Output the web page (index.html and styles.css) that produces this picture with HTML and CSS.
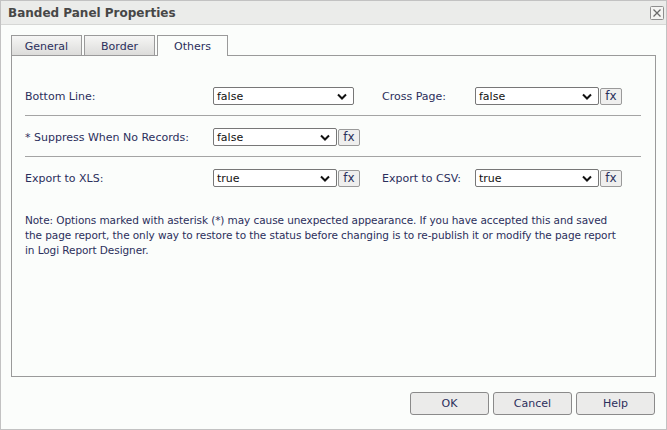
FILE: index.html
```html
<!DOCTYPE html>
<html>
<head>
<meta charset="utf-8">
<link rel="stylesheet" href="styles.css">
</head>
<body>
<div class="dialog">
  <div class="titlebar">
    <span class="title">Banded Panel Properties</span>
    <span class="close"><svg width="14" height="14" viewBox="0 0 14 14"><rect x="0.5" y="0.5" width="13" height="13" rx="1" fill="#f4f4f2" stroke="#8e8e8e"/><path d="M3.5 3.5 L10.5 10.5 M10.5 3.5 L3.5 10.5" stroke="#6a6a6a" stroke-width="1.3"/></svg></span>
  </div>
  <div class="body">
    <div class="tabs">
      <div class="tab">General</div>
      <div class="tab">Border</div>
      <div class="tab active">Others</div>
    </div>
    <div class="panel">
      <div class="row first">
        <span class="label">Bottom Line:</span>
        <span class="field"><span class="select wide">false<svg class="chev" width="10" height="7" viewBox="0 0 10 7"><path d="M1 1.5 L5 5.5 L9 1.5" fill="none" stroke="#111" stroke-width="2"/></svg></span></span>
        <span class="label">Cross Page:</span>
        <span class="field"><span class="select">false<svg class="chev" width="10" height="7" viewBox="0 0 10 7"><path d="M1 1.5 L5 5.5 L9 1.5" fill="none" stroke="#111" stroke-width="2"/></svg></span><span class="fx">fx</span></span>
      </div>
      <div class="row">
        <span class="label">* Suppress When No Records:</span>
        <span class="field"><span class="select">false<svg class="chev" width="10" height="7" viewBox="0 0 10 7"><path d="M1 1.5 L5 5.5 L9 1.5" fill="none" stroke="#111" stroke-width="2"/></svg></span><span class="fx">fx</span></span>
      </div>
      <div class="row last">
        <span class="label">Export to XLS:</span>
        <span class="field"><span class="select">true<svg class="chev" width="10" height="7" viewBox="0 0 10 7"><path d="M1 1.5 L5 5.5 L9 1.5" fill="none" stroke="#111" stroke-width="2"/></svg></span><span class="fx">fx</span></span>
        <span class="label">Export to CSV:</span>
        <span class="field"><span class="select">true<svg class="chev" width="10" height="7" viewBox="0 0 10 7"><path d="M1 1.5 L5 5.5 L9 1.5" fill="none" stroke="#111" stroke-width="2"/></svg></span><span class="fx">fx</span></span>
      </div>
      <p class="note">Note: Options marked with asterisk (*) may cause unexpected appearance. If you have accepted this and saved the page report, the only way to restore to the status before changing is to re-publish it or modify the page report in Logi Report Designer.</p>
    </div>
    <div class="buttons">
      <span class="btn">OK</span>
      <span class="btn">Cancel</span>
      <span class="btn">Help</span>
    </div>
  </div>
</div>
</body>
</html>
```
FILE: styles.css
```css
html, body {
  margin: 0;
  padding: 0;
  background: #fbfdfb;
}
body {
  font-family: "DejaVu Sans", Verdana, sans-serif;
  font-size: 11px;
}
.dialog {
  width: 665px;
  height: 428px;
  border: 1px solid #c2c2c2;
  background: #fbfdfb;
  display: flex;
  flex-direction: column;
}
.titlebar {
  height: 23px;
  background: #ebecea;
  border-bottom: 1px solid #d6d7d5;
  display: flex;
  align-items: center;
  justify-content: space-between;
  padding: 0 2px 0 7px;
}
.title {
  font-weight: bold;
  font-size: 12px;
  color: #474747;
}
.close {
  display: flex;
  margin-top: 1px;
}
.body {
  padding: 10px 10px 0 10px;
  display: flex;
  flex-direction: column;
}
.tabs {
  display: flex;
  gap: 2px;
  height: 20px;
  align-items: flex-end;
}
.tab {
  width: 69px;
  height: 18px;
  border: 1px solid #9a9a9a;
  border-bottom: none;
  background: linear-gradient(#f6f6f5, #dcdcda);
  color: #2b2f5c;
  display: flex;
  align-items: center;
  justify-content: center;
  padding-top: 1px;
}
.tab.active {
  height: 20px;
  background: #fbfdfb;
  position: relative;
  top: 1px;
  padding-top: 0;
  z-index: 1;
}
.panel {
  height: 320px;
  border: 1px solid #9a9a9a;
  padding: 0 14px 0 13px;
  box-sizing: content-box;
}
.row {
  display: grid;
  grid-template-columns: 188px 169px 93px auto;
  align-items: center;
  height: 18px;
  padding: 12px 0 10px;
  border-bottom: 1px solid #a4a4a4;
}
.row.first {
  padding-top: 31px;
}
.row.last {
  border-bottom: none;
}
.label {
  color: #2b2f5c;
}
.field {
  display: flex;
  align-items: center;
}
.select {
  box-sizing: border-box;
  width: 124px;
  height: 18px;
  border: 1px solid #777;
  border-radius: 2px;
  background: #fff;
  color: #111;
  display: flex;
  align-items: center;
  justify-content: space-between;
  padding: 0 6px 0 3px;
}
.select.wide {
  width: 141px;
}
.chev {
  display: block;
}
.fx {
  box-sizing: border-box;
  width: 22px;
  height: 17px;
  margin-left: 1px;
  border: 1px solid #9a9a9a;
  border-radius: 2px;
  background: #efefee;
  color: #2b2f5c;
  display: flex;
  align-items: center;
  justify-content: center;
  font-size: 12px;
  padding-bottom: 1px;
}
.note {
  margin: 16px 0 0;
  padding-right: 20px;
  color: #2b2f5c;
  line-height: 15px;
  font-size: 10.5px;
  letter-spacing: -0.08px;
}
.buttons {
  display: flex;
  justify-content: flex-end;
  gap: 4px;
  margin-top: 15px;
  padding-right: 1px;
}
.btn {
  box-sizing: border-box;
  width: 79px;
  height: 23px;
  border: 1px solid #8a8a8a;
  border-radius: 3px;
  background: #ebebea;
  color: #2b2f5c;
  display: flex;
  align-items: center;
  justify-content: center;
}
```
